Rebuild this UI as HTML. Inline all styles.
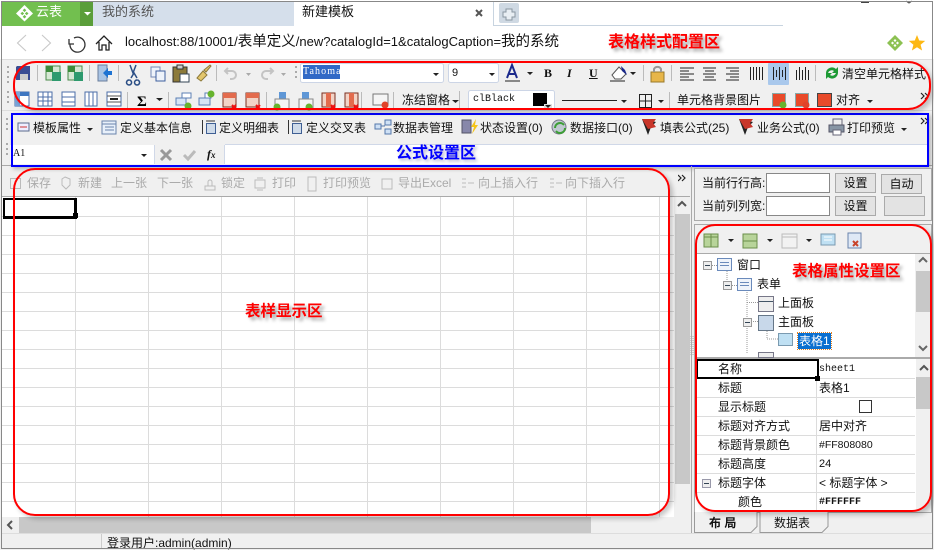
<!DOCTYPE html>
<html><head><meta charset="utf-8"><style>
html,body{margin:0;padding:0;background:#fff}
#r{position:relative;width:934px;height:550px;overflow:hidden;background:#f0f0f0;font:12px "Liberation Sans","Noto Sans CJK SC",sans-serif;color:#111}
#r>div,#r>svg{position:absolute}
.t{white-space:nowrap;line-height:16px;height:16px}
.g{color:#aaa}
.a{font-weight:bold;color:#f00;font-size:16px;line-height:20px;white-space:nowrap;text-shadow:3px 3px 3px rgba(0,0,0,.35)}
.btn{background:#e3e3e3;border:1px solid #aaa;box-sizing:border-box;text-align:center;line-height:19px}
.inp{background:#fff;border:1px solid #888;box-sizing:border-box}
.m{font-family:"Liberation Mono",monospace}
.c{font-size:14.500px}
</style></head><body><div id="r">
<!-- tabs -->
<div style="left:0;top:0;width:934px;height:59px;background:#fff"></div>
<div style="left:2px;top:2px;width:78px;height:24px;background:#72bf4f"></div>
<div style="left:80px;top:2px;width:13px;height:24px;background:#5a9e3a"></div>
<div style="left:93px;top:2px;width:201px;height:24px;background:#d5dfeb"></div>
<div style="left:493px;top:25px;width:290px;height:1px;background:#c8d4e0"></div>
<div style="left:493px;top:2px;width:1px;height:24px;background:#c8d4e0"></div>
<div style="left:499px;top:3px;width:20px;height:20px;background:#cfd9e3;border-radius:2px"></div>
<svg style="left:0;top:0" width="934" height="59">
<path d="M24.500 5l8.500 8.500-8.500 8-8.500-8z" fill="#fff"/><path d="M24.500 8.500l1.800 1.800-1.800 1.800-1.800-1.800zM20.500 13.500l1.800-1.800 1.800 1.800-1.800 1.800zM28.500 13.500l-1.800-1.800-1.800 1.800 1.800 1.800zM24.500 18.500l1.800-1.800-1.800-1.800-1.800 1.800z" fill="#72bf4f"/>
<path d="M84 12h7l-3.500 3.500z" fill="#fff"/>
<path d="M476 10l6 6M482 10l-6 6" stroke="#555" stroke-width="2"/>
<path d="M506 9h6v3h3v5h-3v3h-6v-3h-3v-5h3z" fill="#e8eef3" stroke="#8a96a2"/>
<path d="M861 2.500h8M906 1l3 2 3-2" fill="none" stroke="#444"/>
<path d="M26 35l-8.500 8 8.500 8M42 35l8.500 8-8.500 8" fill="none" stroke="#c8c8c8" stroke-width="1.100"/>
<path d="M74 38a7.500 7.500 0 1 1-4 6M69 39l0 5 5 0" fill="none" stroke="#333" stroke-width="1.300"/>
<path d="M96 44l8-8 8 8M99 42v8h3v-5h4v5h3v-8" fill="none" stroke="#222" stroke-width="1.300"/>
<path d="M895 35l8 8-8 8-8-8z" fill="#8cc152"/><path d="M895 39l1.500 1.500-1.500 1.500-1.500-1.500zM891 43l1.500-1.500 1.500 1.500-1.500 1.500zM899 43l-1.500-1.500-1.500 1.500 1.500 1.500zM895 47l1.500-1.500-1.500-1.500-1.500 1.500z" fill="#fff"/>
<path d="M917 35l2.200 5.500 6 .4-4.600 3.800 1.500 5.800-5.100-3.200-5.100 3.200 1.500-5.800-4.600-3.800 6-.4z" fill="#fdb813"/>
</svg>
<div class="t" style="left:36px;top:4px;color:#fff;font-size:13px">云表</div>
<div class="t" style="left:102px;top:4px;color:#555;font-size:13px">我的系统</div>
<div class="t" style="left:302px;top:4px;font-size:13px">新建模板</div>
<div class="t" style="left:125px;top:34px;font-size:13px">localhost:88/10001/<span class="c">表单定义</span>/new?catalogId=1&amp;catalogCaption=<span class="c">我的系统</span></div>
<div class="a" style="left:608px;top:33px">表格样式配置区</div>

<!-- toolbar row separators -->
<div style="left:1px;top:59px;width:932px;height:1px;background:#ddd"></div>
<div style="left:1px;top:110px;width:932px;height:1px;background:#ddd"></div>
<div style="left:1px;top:165px;width:932px;height:1px;background:#aaa"></div>

<!-- icons row 1,2 -->
<svg style="left:0;top:58px" width="934" height="55">
<g fill="#aaa"><rect x="7" y="8" width="2" height="2"/><rect x="7" y="13" width="2" height="2"/><rect x="7" y="18" width="2" height="2"/><rect x="7" y="23" width="2" height="2"/><rect x="7" y="33" width="2" height="2"/><rect x="7" y="38" width="2" height="2"/><rect x="7" y="43" width="2" height="2"/><rect x="295" y="8" width="2" height="2"/><rect x="295" y="13" width="2" height="2"/><rect x="295" y="18" width="2" height="2"/></g>
<path d="M17 8h13v14h-14v-13z" fill="#3a4d94"/><rect x="20" y="16" width="8" height="6" fill="#ccc"/>
<g fill="#bbb"><rect x="37" y="7" width="1" height="16"/><rect x="89" y="7" width="1" height="16"/><rect x="118" y="7" width="1" height="16"/><rect x="216" y="7" width="1" height="16"/><rect x="127" y="34" width="1" height="17"/><rect x="168" y="34" width="1" height="17"/><rect x="266" y="34" width="1" height="17"/><rect x="361" y="34" width="1" height="17"/><rect x="393" y="34" width="1" height="17"/></g>
<rect x="46" y="8" width="14" height="14" fill="#d6e8d4" stroke="#4a8a4a"/><rect x="52" y="14" width="9" height="9" fill="#2e9a6e"/><rect x="46" y="8" width="7" height="6" fill="#3c8c3c"/>
<rect x="68" y="8" width="14" height="14" fill="#d6e8d4" stroke="#4a8a4a"/><rect x="74" y="14" width="9" height="9" fill="#2e9a6e"/><rect x="68" y="8" width="7" height="6" fill="#3c8c3c"/>
<rect x="98" y="7" width="9" height="16" fill="#a9c4e4" stroke="#6a7e9c"/><path d="M103 15l5-5v3h4v4h-4v3z" fill="#1e73d2"/>
<path d="M130 7l3 8 3-8M129 22a2.500 2.500 0 1 0 .1 0M137 22a2.500 2.500 0 1 0 .1 0M131 20l3-5 3 5" fill="none" stroke="#2c4f86" stroke-width="1.500"/>
<rect x="151" y="9" width="9" height="10" fill="#eef3fa" stroke="#7389b5"/><rect x="156" y="13" width="9" height="10" fill="#eef3fa" stroke="#3e5f9e"/>
<rect x="173" y="9" width="14" height="15" fill="#8c7a3a" stroke="#333"/><rect x="177" y="7" width="6" height="4" fill="#ccc" stroke="#333"/><rect x="180" y="16" width="9" height="8" fill="#fff" stroke="#345"/>
<path d="M197 20l6-7 4 4-6 6zM204 12l6-5 1 1-5 6z" fill="#e3c66c" stroke="#8d7a3a"/>
<g fill="none" stroke="#c4c4c4" stroke-width="2"><path d="M228 10l-3 3 3 3M225 13h7a4 4 0 0 1 0 8h-2"/><path d="M270 10l3 3-3 3M273 13h-7a4 4 0 0 0 0 8h2"/></g>
<g fill="#aaa"><path d="M246 15h5l-2.500 3zM281 15h5l-2.500 3z"/></g>
<!-- font box -->
<rect x="300.500" y="5.500" width="143" height="19" rx="2" fill="#fff" stroke="#ccd5e6"/><rect x="448.500" y="5.500" width="50" height="19" rx="2" fill="#fff" stroke="#ccd5e6"/>
<path d="M433 15h6l-3 3zM489 15h6l-3 3zM527 14h6l-3 3zM630 14h6l-3 3z" fill="#222"/>
<path d="M507 20l5-13 5 13M508 16h8" fill="none" stroke="#1c2a8c" stroke-width="2"/><rect x="505" y="22" width="15" height="2" fill="#888"/>
<path d="M612 17l7-8 7 7-5 5h-6z" fill="#fff" stroke="#555"/><path d="M621 8l4 4 2 5-5-4z" fill="#1c2a8c"/><rect x="610" y="22" width="15" height="2" fill="#888"/>
<rect x="651" y="14" width="13" height="10" fill="#e7b64a" stroke="#9a7a2a"/><path d="M654 14v-3a4 4 0 0 1 7 0v3" fill="none" stroke="#999" stroke-width="2"/>
<rect x="643" y="7" width="1" height="16" fill="#bbb"/><rect x="671" y="7" width="1" height="16" fill="#bbb"/>
<g stroke="#222"><path d="M680 10h14M680 13h9M680 16h14M680 19h9M680 22h14M703 10h13M705 13h9M703 16h13M705 19h9M703 22h13M726 10h13M730 13h9M726 16h13M730 19h9M726 22h13"/>
<path d="M750.500 9v13M753.500 9v13M756.500 9v13M759.500 9v13M762.500 9v13"/></g>
<rect x="768" y="5" width="21" height="22" fill="#a9c8ec" rx="1"/>
<g stroke="#222"><path d="M773.500 9v13M776.500 12v7M779.500 9v13M782.500 12v7M785.500 9v13M796.500 12v10M799.500 9v13M802.500 12v10M805.500 9v13M808.500 12v10"/></g>
<rect x="815" y="7" width="1" height="16" fill="#bbb"/>
<path d="M826 15a6 6 0 0 1 10-4l2-2v6h-6l2-2a4 4 0 0 0-6 2zM838 15a6 6 0 0 1-10 4l-2 2v-6h6l-2 2a4 4 0 0 0 6-2z" fill="#1d9a35"/>
<!-- row 2 -->
<g fill="#fff" stroke="#4b6ea9"><rect x="15" y="34" width="14" height="14"/><rect x="38" y="34" width="14" height="14"/><rect x="62" y="34" width="13" height="14"/><rect x="85" y="34" width="12" height="14"/><rect x="107" y="34" width="14" height="14"/></g>
<rect x="15" y="34" width="14" height="4" fill="#3f77c1"/><rect x="15" y="34" width="5" height="14" fill="#79a4d9"/>
<g stroke="#4b6ea9"><path d="M38 39h14M38 43h14M43 34v14M48 34v14M62 39h13M62 44h13M89 34v14M93 34v14"/></g>
<path d="M107 38h14M107 44h14" stroke="#555"/><path d="M110 41h8" stroke="#222" stroke-width="2"/>
<text x="137" y="48" font-size="15" font-weight="bold" font-family="Liberation Serif">Σ</text>
<path d="M156 40h7l-3.500 3z" fill="#222"/>
<g fill="#d7e5f6" stroke="#5c7fb4"><rect x="176" y="40" width="10" height="7"/><rect x="182" y="35" width="9" height="5" fill="#fff"/><rect x="199" y="40" width="11" height="7"/><rect x="205" y="35" width="6" height="5" fill="#fff"/></g>
<circle cx="188" cy="48" r="3.500" fill="#66b32e"/><circle cx="211" cy="36" r="3.500" fill="#66b32e"/>
<g fill="#f2d3c6" stroke="#7a2f20"><rect x="223" y="35" width="13" height="14"/><rect x="246" y="35" width="13" height="14"/></g>
<rect x="223" y="35" width="13" height="5" fill="#e36b4d"/><rect x="246" y="35" width="13" height="5" fill="#e36b4d"/>
<path d="M232 47l4 4M236 47l-4 4M256 47l4 4M260 47l-4 4" stroke="#e11" stroke-width="2"/>
<rect x="279" y="34" width="7" height="12" fill="#5f97d6"/><rect x="275" y="41" width="14" height="10" fill="#f4f4f4" stroke="#888"/><circle cx="277" cy="49" r="3.500" fill="#66b32e"/>
<rect x="302" y="34" width="7" height="12" fill="#5f97d6"/><rect x="299" y="41" width="14" height="10" fill="#f4f4f4" stroke="#888"/><circle cx="309" cy="49" r="3.500" fill="#66b32e"/>
<g fill="#f2d3c6" stroke="#7a2f20"><rect x="322" y="35" width="13" height="14"/><rect x="345" y="35" width="13" height="14"/></g>
<rect x="326" y="35" width="5" height="14" fill="#e36b4d"/><rect x="349" y="35" width="5" height="14" fill="#e36b4d"/>
<path d="M331 47l4 4M335 47l-4 4M354 47l4 4M358 47l-4 4" stroke="#e11" stroke-width="2"/>
<rect x="373" y="36" width="15" height="11" fill="#f5f5f5" stroke="#777"/><circle cx="385" cy="47" r="3.500" fill="#e0432a"/>
<rect x="459" y="33" width="1" height="18" fill="#bbb"/><rect x="470" y="33" width="1" height="18" fill="#bbb"/>
<path d="M452 42h7l-3.500 3z" fill="#222"/>
<rect x="468.500" y="32.500" width="86" height="19" rx="2" fill="#fff" stroke="#ccd5e6"/>
<rect x="533" y="35" width="14" height="13" fill="#000"/><rect x="544" y="46" width="8" height="5" fill="#ddd"/><path d="M545 47h6l-3 3z" fill="#222"/>
<path d="M562 42.500h55" stroke="#222"/><path d="M621 42h6l-3 3z" fill="#222"/>
<path d="M639.500 36.500h12v13h-12zM645.500 36.500v13M639.500 43h12" fill="none" stroke="#222"/><path d="M658 42h6l-3 3z" fill="#222"/>
<rect x="669" y="34" width="1" height="16" fill="#bbb"/>
<g stroke="#8aa"><rect x="772.500" y="35.500" width="13" height="13" fill="#e84a2a"/><rect x="795.500" y="35.500" width="13" height="13" fill="#e84a2a"/><rect x="817.500" y="35.500" width="14" height="13" fill="#e84a2a" stroke="#444"/></g>
<circle cx="783" cy="47" r="3.500" fill="#66b32e"/><circle cx="806" cy="47" r="3.500" fill="#e0432a"/>
<path d="M867 42h6l-3 3z" fill="#222"/>
<path d="M921 35l3 3-3 3M925 35l3 3-3 3" fill="none" stroke="#222" stroke-width="1.200"/>
</svg>
<div style="left:303px;top:65px;width:37px;height:14px;background:#3169c6;color:#fff;font:10px/14px 'Liberation Serif',serif;letter-spacing:1.100px;white-space:nowrap;overflow:hidden">Tahoma</div>
<div class="t" style="left:452px;top:65px;font-size:11px">9</div>
<div class="t" style="left:544px;top:65px;font:bold 12px/16px 'Liberation Serif',serif">B</div>
<div class="t" style="left:567px;top:65px;font:bold italic 12px/16px 'Liberation Serif',serif">I</div>
<div class="t" style="left:589px;top:65px;font:bold 12px/16px 'Liberation Serif',serif;text-decoration:underline">U</div>
<div class="t" style="left:842px;top:66px">清空单元格样式</div>
<div class="t" style="left:402px;top:92px">冻结窗格</div>
<div class="m t" style="left:473px;top:92px;font-size:10px">clBlack</div>
<div class="t" style="left:677px;top:92px">单元格背景图片</div>
<div class="t" style="left:836px;top:92px">对齐</div>

<!-- row 3 -->
<svg style="left:0;top:110px" width="934" height="55">
<g fill="#aaa"><rect x="6" y="8" width="2" height="2"/><rect x="6" y="13" width="2" height="2"/><rect x="6" y="18" width="2" height="2"/><rect x="6" y="33" width="2" height="2"/><rect x="6" y="38" width="2" height="2"/><rect x="6" y="43" width="2" height="2"/></g>
<rect x="18" y="13" width="11" height="8" fill="#eef" stroke="#5a6a8c"/><path d="M20 17h7" stroke="#c33"/>
<rect x="102" y="11" width="14" height="13" fill="#e8f0fa" stroke="#6a84ac"/><path d="M102 14h14M105 17h9M105 20h9" stroke="#6a84ac"/>
<path d="M202.500 10v14M288.500 10v14" stroke="#333"/><g stroke="#3f5f94"><rect x="206.500" y="13.500" width="9" height="10" fill="#cfdbe9"/><rect x="292.500" y="13.500" width="9" height="10" fill="#cfdbe9"/></g><path d="M206 11h9M292 11h9" stroke="#333"/>
<rect x="375" y="14" width="6" height="5" fill="#cfe1f5" stroke="#5577aa"/><rect x="385" y="10" width="6" height="5" fill="#cfe1f5" stroke="#5577aa"/><rect x="385" y="19" width="6" height="5" fill="#cfe1f5" stroke="#5577aa"/><path d="M381 16h4" stroke="#5577aa"/>
<rect x="462" y="10" width="9" height="13" fill="#88a" stroke="#556"/><path d="M476 9l-5 8h3l-2 7 6-9h-3z" fill="#f5c518"/>
<ellipse cx="559" cy="17" rx="7" ry="7" fill="#bfc9d0" stroke="#778"/><path d="M555 18a5 5 0 0 1 9-3M565 18a5 5 0 0 1-9 3" fill="none" stroke="#3d9e36" stroke-width="2"/>
<path d="M642 9l6 16 3-8 5-5z" fill="#222"/><path d="M642 9h14l-3 4 3 4-8 2z" fill="#c8362a"/>
<path d="M739 9l6 16 3-8 5-5z" fill="#222"/><path d="M739 9h14l-3 4 3 4-8 2z" fill="#c8362a"/>
<rect x="833" y="9" width="9" height="7" fill="#eee" stroke="#667"/><rect x="829" y="15" width="15" height="7" fill="#8896a5" stroke="#556"/><rect x="833" y="20" width="8" height="5" fill="#fff" stroke="#667"/>
<path d="M87 18h6l-3 3zM901 18h6l-3 3z" fill="#222"/>
<path d="M921 8l3 3-3 3M925 8l3 3-3 3" fill="none" stroke="#222" stroke-width="1.200"/>
<!-- formula -->
<rect x="10" y="35" width="144" height="19" fill="#fff"/><path d="M141 44h6l-3 3z" fill="#222"/>
<path d="M154.500 35v19" stroke="#d0d8e8"/>
<path d="M161 40l10 10M171 40l-10 10" stroke="#999" stroke-width="3"/>
<path d="M184 45l4 4 7-8" fill="none" stroke="#bbb" stroke-width="3"/>
<rect x="225" y="35" width="702" height="19" fill="#fff"/><path d="M225 34.500h702" stroke="#d0d8e8"/><path d="M224.500 35v19" stroke="#d0d8e8"/>
</svg>
<div class="t" style="left:33px;top:120px">模板属性</div>
<div class="t" style="left:120px;top:120px">定义基本信息</div>
<div class="t" style="left:219px;top:120px">定义明细表</div>
<div class="t" style="left:306px;top:120px">定义交叉表</div>
<div class="t" style="left:393px;top:120px">数据表管理</div>
<div class="t" style="left:480px;top:120px">状态设置(0)</div>
<div class="t" style="left:570px;top:120px">数据接口(0)</div>
<div class="t" style="left:660px;top:120px">填表公式(25)</div>
<div class="t" style="left:757px;top:120px">业务公式(0)</div>
<div class="t" style="left:847px;top:120px">打印预览</div>
<div class="t" style="left:13px;top:146px;font:10px/16px 'Liberation Serif',serif">A1</div>
<div class="t" style="left:207px;top:146px;font:italic bold 12px/16px 'Liberation Serif',serif">f<span style="font-size:9px">x</span></div>
<div style="left:396px;top:144px;color:#0000ff;font-weight:bold;font-size:16px;line-height:20px;white-space:nowrap;text-shadow:2px 2px 3px rgba(0,0,100,.3)">公式设置区</div>
<div style="left:11px;top:113px;width:914px;height:50px;border:2px solid #00f;box-shadow:2px 2px 4px rgba(0,0,0,.25)"></div>
<div style="left:13px;top:61px;width:914px;height:45px;border:2px solid #f00;border-radius:23px;box-shadow:3px 3px 5px rgba(0,0,0,.2)"></div>

<!-- left main toolbar -->
<svg style="left:0;top:170px" width="690" height="26">
<g fill="none" stroke="#bbb"><rect x="10.500" y="8.500" width="10" height="10"/><path d="M65 7l5 2v6l-4 4-4-4v-6zM205 16h10v4h-10zM208 16v-4a2 2 0 0 1 4 0v4"/><path d="M255 10h10v8h-10zM257 8h6M257 20h6M308 7h8v14h-8zM382 9h10v10h-10zM462 9h4M462 13h4M462 17h4M550 9h4M550 13h4M550 17h4M468 13h6M556 13h6"/></g>
</svg>
<div class="t g" style="left:27px;top:175px">保存</div>
<div class="t g" style="left:78px;top:175px">新建</div>
<div class="t g" style="left:111px;top:175px">上一张</div>
<div class="t g" style="left:157px;top:175px">下一张</div>
<div class="t g" style="left:221px;top:175px">锁定</div>
<div class="t g" style="left:272px;top:175px">打印</div>
<div class="t g" style="left:323px;top:175px">打印预览</div>
<div class="t g" style="left:398px;top:175px">导出Excel</div>
<div class="t g" style="left:478px;top:175px">向上插入行</div>
<div class="t g" style="left:565px;top:175px">向下插入行</div>
<svg style="left:678px;top:172px" width="12" height="12"><path d="M0 3l3 3-3 3M4 3l3 3-3 3" fill="none" stroke="#222" stroke-width="1.200"/></svg>

<!-- grid -->
<div style="left:2px;top:196px;width:688px;height:322px;background:#fff;border-top:1px solid #aaa;box-sizing:border-box"></div>
<svg style="left:2px;top:197px" width="672" height="321">
<g stroke="#dcdcdc"><path d="M73.500 0V321M146.500 0V321M219.500 0V321M292.500 0V321M365.500 0V321M438.500 0V321M511.500 0V321M584.500 0V321M657.500 0V321"/>
<path d="M0 19.500H672M0 38.500H672M0 57.500H672M0 76.500H672M0 95.500H672M0 114.500H672M0 133.500H672M0 152.500H672M0 171.500H672M0 190.500H672M0 209.500H672M0 228.500H672M0 247.500H672M0 266.500H672M0 285.500H672M0 304.500H672"/></g>
</svg>
<div style="left:674px;top:197px;width:16px;height:321px;background:#f0f0f0"></div>
<div style="left:675px;top:214px;width:15px;height:270px;background:#c8c8c8"></div>
<div style="left:3px;top:198px;width:69px;height:16px;border:2px solid #000;border-right-width:3px;border-bottom-width:3px;background:#fff"></div>
<div style="left:73px;top:213px;width:5px;height:5px;background:#000"></div>
<svg style="left:674px;top:197px" width="16" height="17"><path d="M4 9l4-4 4 4" fill="none" stroke="#555" stroke-width="2"/></svg>
<!-- h scrollbar -->
<div style="left:2px;top:517px;width:688px;height:16px;background:#f0f0f0"></div>
<div style="left:19px;top:517px;width:572px;height:16px;background:#c8c8c8"></div>
<svg style="left:4px;top:519px" width="12" height="12"><path d="M8 2l-4 4 4 4" fill="none" stroke="#555" stroke-width="2"/></svg>
<div style="left:2px;top:533px;width:930px;height:1px;background:#ddd"></div>
<div style="left:101px;top:534px;width:1px;height:14px;background:#ccc"></div>
<div class="t" style="left:107px;top:535px">登录用户:admin(admin)</div>
<div class="a" style="left:245px;top:302px;font-size:15.500px">表样显示区</div>
<div style="left:13px;top:168px;width:653px;height:344px;border:2px solid #f00;border-radius:22px;box-shadow:3px 3px 5px rgba(0,0,0,.22)"></div>

<!-- right panel -->
<div style="left:691px;top:166px;width:1px;height:367px;background:#aaa"></div>
<div style="left:694px;top:168px;width:238px;height:53px;border:1px solid #aaa;box-sizing:border-box;background:#f0f0f0"></div>
<div class="t" style="left:702px;top:175px">当前行行高:</div>
<div class="t" style="left:702px;top:198px">当前列列宽:</div>
<div class="inp" style="left:766px;top:173px;width:64px;height:20px"></div>
<div class="inp" style="left:766px;top:196px;width:64px;height:20px"></div>
<div class="btn" style="left:835px;top:173px;width:41px;height:20px">设置</div>
<div class="btn" style="left:835px;top:196px;width:41px;height:20px">设置</div>
<div class="btn" style="left:881px;top:174px;width:41px;height:20px">自动</div>
<div class="btn" style="left:884px;top:196px;width:41px;height:20px"></div>

<div style="left:694px;top:224px;width:238px;height:134px;border:1px solid #aaa;box-sizing:border-box;background:#fff"></div>
<div style="left:695px;top:225px;width:236px;height:29px;background:#f0f0f0;border-bottom:1px solid #aaa;box-sizing:border-box"></div>
<svg style="left:694px;top:224px" width="238" height="134">
<rect x="10" y="10" width="14" height="13" fill="#b8d49a" stroke="#6a8e4a"/><path d="M17 10v13M10 13h14" stroke="#6a8e4a"/>
<rect x="49" y="10" width="14" height="14" fill="#b8d49a" stroke="#6a8e4a"/><path d="M49 17h14" stroke="#6a8e4a"/>
<path d="M88 10h15v14h-15z" fill="#f2f2f2" stroke="#bbb"/><path d="M88 13h15" stroke="#bbb"/>
<path d="M34 15h6l-3 3zM73 15h6l-3 3zM112 15h6l-3 3z" fill="#222"/>
<rect x="127" y="10" width="14" height="11" fill="#bfe0f3" stroke="#7a9ab0"/><path d="M130 13h8M130 16h8" stroke="#fff"/>
<rect x="154" y="9" width="13" height="15" fill="#dfe9f6" stroke="#6a84ac"/><path d="M159 17l5 5M164 17l-5 5" stroke="#c8432a" stroke-width="2"/>
<!-- tree -->
<g fill="none" stroke="#999" stroke-dasharray="1 1"><path d="M18 41.500h5M33 47v9M38 61.500h5M53 66v64M53 78.500h11M57 97.500h7M73 105v10h11"/></g>
<g fill="#eee" stroke="#999"><rect x="9.500" y="37.500" width="8" height="8"/><rect x="29.500" y="57.500" width="8" height="8"/><rect x="49.500" y="94.500" width="8" height="8"/></g>
<path d="M11 41.500h5M31 61.500h5M51 98.500h5" stroke="#345"/>
<g fill="#eef3fa" stroke="#6a8abb"><rect x="23.500" y="34.500" width="14" height="12"/><rect x="43.500" y="54.500" width="14" height="12"/></g>
<path d="M26 38.500h9M26 41.500h9M46 58.500h9M46 61.500h9" stroke="#6a8abb"/>
<rect x="64.500" y="72.500" width="15" height="15" fill="#eee" stroke="#778"/><path d="M65 77.500h14" stroke="#456"/>
<rect x="64.500" y="91.500" width="15" height="15" fill="#c8d8ea" stroke="#678"/>
<rect x="84.500" y="109.500" width="14" height="12" fill="#bfe0f3" stroke="#7a9ab0"/>
<rect x="64.500" y="128.500" width="15" height="5" fill="#eee" stroke="#778"/>
<rect x="221" y="30" width="16" height="103" fill="#f0f0f0"/><rect x="222" y="47" width="15" height="41" fill="#c8c8c8"/>
<path d="M225 38l4-4 4 4M225 122l4 4 4-4" fill="none" stroke="#666" stroke-width="2"/>
</svg>
<div class="t" style="left:737px;top:257px">窗口</div>
<div class="t" style="left:757px;top:276px">表单</div>
<div class="t" style="left:778px;top:295px">上面板</div>
<div class="t" style="left:778px;top:314px">主面板</div>
<div class="t" style="left:798px;top:333px;background:#0a6fd0;color:#fff;outline:1px dotted #e08020;padding:0 1px">表格1</div>
<div class="a" style="left:792px;top:262px;font-size:15.500px">表格属性设置区</div>

<!-- props -->
<div style="left:694px;top:358px;width:238px;height:154px;background:#fff;border:1px solid #aaa;box-sizing:border-box;border-bottom:0"></div>
<svg style="left:695px;top:359px" width="236" height="153"><g stroke="#dcdcdc"><path d="M121.500 0V153M0 19.500H220M0 38.500H220M0 57.500H220M0 76.500H220M0 95.500H220M0 114.500H220M0 133.500H220"/></g>
<rect x="221" y="0" width="15" height="153" fill="#f0f0f0"/><rect x="221" y="18" width="15" height="32" fill="#c8c8c8"/><path d="M225 11l4-4 4 4" fill="none" stroke="#555" stroke-width="2"/>
<rect x="7.500" y="120.500" width="8" height="8" fill="#eee" stroke="#99a"/><path d="M9 124.500h5" stroke="#345"/>
<rect x="164.500" y="41.500" width="12" height="12" fill="#fff" stroke="#333"/></svg>
<div style="left:696px;top:359px;width:119px;height:16px;border:2px solid #000;background:#fff"></div>
<div style="left:815px;top:376px;width:5px;height:5px;background:#000"></div>
<div class="t" style="left:718px;top:361px">名称</div>
<div class="t" style="left:718px;top:380px">标题</div>
<div class="t" style="left:718px;top:399px">显示标题</div>
<div class="t" style="left:718px;top:418px">标题对齐方式</div>
<div class="t" style="left:718px;top:437px">标题背景颜色</div>
<div class="t" style="left:718px;top:456px">标题高度</div>
<div class="t" style="left:718px;top:475px">标题字体</div>
<div class="t" style="left:738px;top:494px">颜色</div>
<div class="m t" style="left:819px;top:362px;font-size:10px">sheet1</div>
<div class="t" style="left:819px;top:380px">表格1</div>
<div class="t" style="left:819px;top:418px">居中对齐</div>
<div class="t" style="left:819px;top:437px;font-size:10.500px">#FF808080</div>
<div class="t" style="left:819px;top:456px;font-size:11px">24</div>
<div class="t" style="left:819px;top:475px">&lt; 标题字体 &gt;</div>
<div class="t" style="left:819px;top:495px;font:bold 10px/16px 'Liberation Mono',monospace">#FFFFFF</div>
<!-- tabs bottom -->
<div style="left:694px;top:512px;width:238px;height:1px;background:#aaa"></div>
<svg style="left:694px;top:512px" width="150" height="22"><path d="M.5 0V20.500H57l6-6V0M66 0V20.500H128l6-6V0" fill="#f0f0f0" stroke="#999"/></svg>
<div class="t" style="left:709px;top:515px;font-weight:bold">布 局</div>
<div class="t" style="left:774px;top:515px">数据表</div>
<div style="left:695px;top:224px;width:237px;height:288px;border:2px solid #f00;border-radius:20px;box-sizing:border-box;box-shadow:3px 3px 5px rgba(0,0,0,.22)"></div>
<svg style="left:690px;top:335px" width="4" height="22"><path d="M1 1v20M3 1v20" stroke="#aaa" stroke-dasharray="1 1"/></svg>
<!-- window border -->
<div style="left:1px;top:1px;width:932px;height:548px;border:1px solid #888;box-sizing:border-box"></div>
</div></body></html>
